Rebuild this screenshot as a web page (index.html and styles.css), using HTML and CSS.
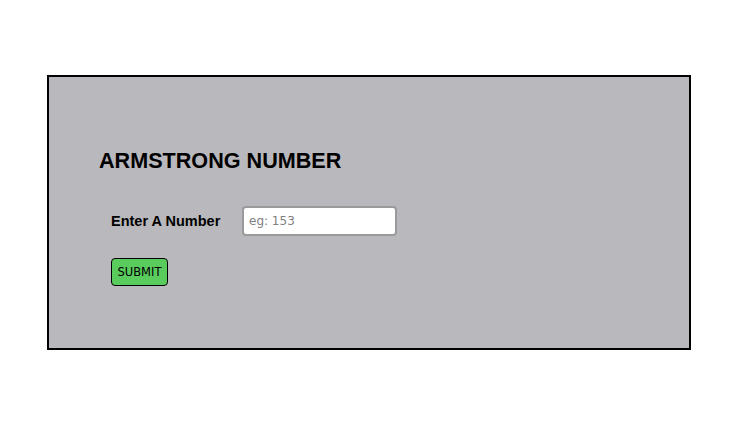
FILE: index.html
```html
<!DOCTYPE html>
<html>
<head>
<meta charset="utf-8">
<link rel="stylesheet" href="styles.css">
</head>
<body>
<div class="box">
  <h1 class="title">ARMSTRONG NUMBER</h1>
  <div class="row">
    <label class="label" for="num">Enter A Number</label>
    <input class="input" id="num" type="text" placeholder="eg: 153">
  </div>
  <button class="btn">SUBMIT</button>
</div>
</body>
</html>
```
FILE: styles.css
```css
html, body { margin: 0; padding: 0; background: #fff; }
body { padding-top: 75px; }
.box {
  margin-left: 47px;
  width: 590px;
  height: 271px;
  border: 2px solid #000;
  background: #b9b8bc;
  padding: 0 0 0 50px;
  box-sizing: content-box;
  font-family: "Liberation Sans", Arial, sans-serif;
}
.title {
  margin: 72px 0 0 0;
  font-size: 21.6px;
  line-height: 24px;
  font-weight: bold;
  color: #000;
}
.row {
  display: flex;
  align-items: center;
  margin: 33px 0 0 12px;
}
.label {
  font-size: 14.5px;
  font-weight: bold;
  color: #000;
  width: 131px;
}
.input {
  width: 155px;
  height: 30px;
  box-sizing: border-box;
  border: 2px solid #9a9a9a;
  border-radius: 4px;
  padding: 0 5px;
  font-family: "DejaVu Sans", Verdana, sans-serif;
  font-size: 12px;
  background: #fff;
}
.input::placeholder { color: #808080; }
.btn {
  display: block;
  margin: 22px 0 0 12px;
  width: 57px;
  height: 28px;
  padding: 0;
  background: #5acc5e;
  border: 1px solid #000;
  border-radius: 4px;
  font-family: "DejaVu Sans", Verdana, sans-serif;
  font-size: 11.5px;
  color: #000;
}
```
